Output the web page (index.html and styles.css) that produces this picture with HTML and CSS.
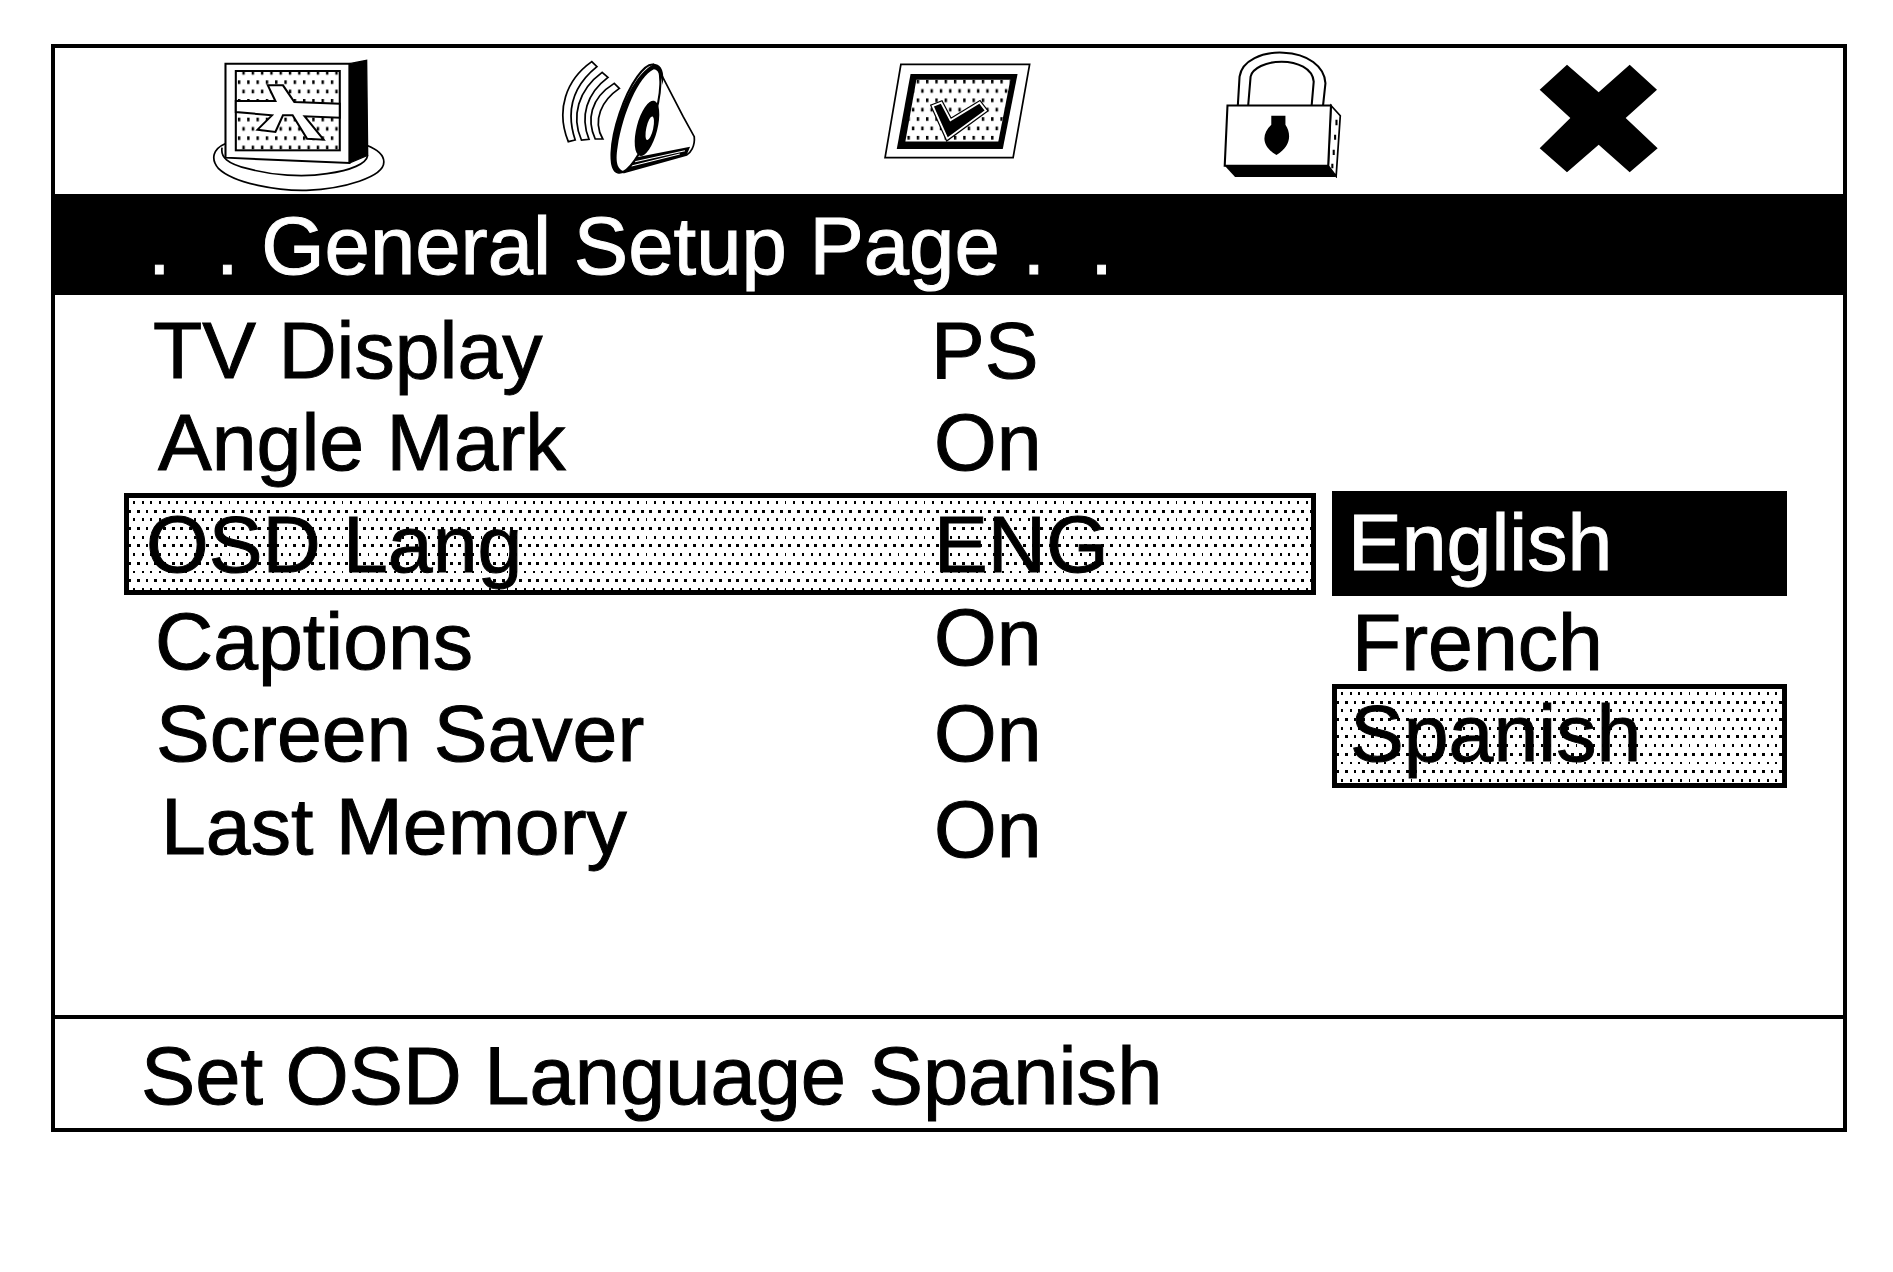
FILE: index.html
```html
<!DOCTYPE html>
<html lang="en">

<head>
  <meta charset="UTF-8" />
  <title>General Setup Page</title>
  <link rel="stylesheet" href="styles.css">
</head>

<body>
  <div class="screen">
    <div class="icons">
      <!-- TV -->
      <svg class="icon icon-tv" viewBox="60 50 520 411" preserveAspectRatio="none">
        <defs>
          <pattern id="dots" width="27" height="56" patternUnits="userSpaceOnUse" patternTransform="translate(6 8)">
            <rect x="0" y="0" width="7" height="11" fill="#000" />
            <rect x="13" y="28" width="7" height="11" fill="#000" />
          </pattern>
        </defs>
        <path d="M104 310C70 325 60 355 85 385C130 430 260 452 340 450C450 445 565 410 565 365C565 340 540 325 515 315" fill="none" stroke="#000" stroke-width="5" />
        <path d="M95 322C90 350 110 370 170 385C240 405 330 412 400 400C470 390 515 370 518 345" fill="none" stroke="#000" stroke-width="5" />
        <polygon points="465,70 515,60 518,345 465,368" fill="#000" stroke="#000" stroke-width="4" />
        <polygon points="105,70 465,70 465,368 105,352" fill="#fff" stroke="#000" stroke-width="6" />
        <rect x="135" y="92" width="302" height="238" fill="#fff" />
        <rect x="135" y="92" width="302" height="238" fill="url(#dots)" stroke="#000" stroke-width="6" />
        <polygon points="228,135 272,135 305,185 437,190 437,232 335,228 390,298 342,295 300,225 272,225 250,275 198,268 240,225 135,215 135,182 250,182" fill="#fff" stroke="#000" stroke-width="6" />
      </svg>
      <!-- speaker -->
      <svg class="icon icon-sound" viewBox="1070 60 400 345" preserveAspectRatio="none">
        <g fill="#fff" stroke="#000" stroke-width="5">
          <path d="M1165 65L1180 80C1120 130 1085 200 1117 300L1097 305C1060 210 1090 120 1165 65Z" />
          <path d="M1195 97L1212 112C1150 160 1130 230 1157 298L1135 300C1105 230 1125 150 1195 97Z" />
          <path d="M1230 130L1245 145C1195 180 1165 240 1197 297L1175 297C1150 240 1160 175 1230 130Z" />
          <path d="M1345 75L1370 110L1430 230L1462 290C1465 320 1450 340 1440 345L1260 397Z" />
        </g>
        <path d="M1295 352L1450 320L1440 345L1262 396Z" fill="#000" />
        <path d="M1290 365L1435 332M1280 378L1420 342" stroke="#fff" stroke-width="3" />
        <ellipse cx="1293" cy="236" rx="50" ry="170" transform="rotate(18 1293 236)" fill="#fff" stroke="#000" stroke-width="6" />
        <path d="M1345 73C1270 110 1215 290 1222 370C1228 398 1250 402 1265 395C1240 392 1232 370 1240 320C1255 220 1300 110 1345 88C1360 90 1368 115 1370 135C1378 95 1365 70 1345 73Z" fill="#000" />
        <ellipse cx="1325" cy="265" rx="30" ry="85" transform="rotate(14 1325 265)" fill="#000" />
        <ellipse cx="1333" cy="265" rx="10" ry="36" transform="rotate(12 1333 265)" fill="#fff" />
      </svg>
      <!-- check -->
      <svg class="icon icon-check" viewBox="70 70 430 290" preserveAspectRatio="none">
        <polygon points="122,74 496,74 448,353 76,353" fill="#fff" stroke="#000" stroke-width="5" />
        <polygon points="150,103 461,103 418,327 110,327" fill="#000" />
        <polygon points="167,120 440,120 405,305 135,305" fill="#fff" />
        <polygon points="167,120 440,120 405,305 135,305" fill="url(#dots)" />
        <polygon points="218,200 238,192 265,245 350,192 365,212 258,292" fill="#000" stroke="#000" stroke-width="18" />
        <polygon points="218,200 238,192 265,245 350,192 365,212 258,292" fill="#fff" stroke="#fff" stroke-width="11" />
        <polygon points="218,200 238,192 265,245 350,192 365,212 258,292" fill="#000" />
      </svg>
      <!-- lock -->
      <svg class="icon icon-lock" viewBox="1055 30 345 385" preserveAspectRatio="none">
        <g fill="none" stroke="#000" stroke-width="6">
          <path d="M1098 197L1103 110C1110 60 1170 35 1230 38C1300 40 1350 80 1352 130L1345 197" />
          <path d="M1128 197L1135 110C1140 85 1180 65 1225 65C1270 65 1315 85 1318 125L1312 197" />
        </g>
        <polygon points="1060,378 1360,378 1383,412 1090,412" fill="#000" />
        <polygon points="1368,197 1395,228 1383,410 1360,378" fill="#fff" stroke="#000" stroke-width="5" />
        <path d="M1384 240V256M1380 285V300M1376 330V346M1372 372V386" stroke="#000" stroke-width="6" />
        <polygon points="1068,197 1368,197 1360,378 1060,378" fill="#fff" stroke="#000" stroke-width="6" />
        <path d="M1195 228H1236V255C1255 285 1250 320 1210 346C1168 320 1165 285 1195 255Z" fill="#000" />
      </svg>
      <!-- close -->
      <svg class="icon icon-close" viewBox="55 40 360 330">
        <polygon points="142,45 237,128 330,45 412,120 318,205 414,296 330,368 237,285 142,368 60,296 152,205 60,120" fill="#000" />
      </svg>
    </div>

    <div class="title">.&nbsp;&nbsp;. General Setup Page .&nbsp;&nbsp;.</div>

    <div class="menu">
      <div class="settings">
        <div class="row row-tv"><span>TV Display</span><span>PS</span></div>
        <div class="row row-angle"><span>Angle Mark</span><span class="value">On</span></div>
        <div class="row row-osd"><span>OSD Lang</span><span class="value">ENG</span></div>
        <div class="row row-captions"><span>Captions</span><span class="value value-up">On</span></div>
        <div class="row row-saver"><span>Screen Saver</span><span class="value">On</span></div>
        <div class="row row-memory"><span>Last Memory</span><span class="value value-down">On</span></div>
      </div>
      <div class="options">
        <div class="option option-current">English</div>
        <div class="option option-french">French</div>
        <div class="option option-selected">Spanish</div>
      </div>
    </div>

    <div class="status">Set OSD Language Spanish</div>
  </div>
</body>

</html>
```

FILE: styles.css
```css
body {
  margin: 0;
  background-color: #fff;
  color: #000;
  font-family: "Liberation Sans", Arial, sans-serif;
  font-size: 80.6px;
  -webkit-text-stroke: 1px;
}

.screen {
  box-sizing: border-box;
  width: 1796px;
  height: 1088px;
  margin: 44px 0 0 51px;
  border: 4px solid #000;
}

.icons {
  display: flex;
  align-items: flex-start;
  height: 146px;
  padding-left: 155px;
}

.icon-tv {
  width: 179px;
  height: 137px;
  margin-top: 9px;
}

.icon-sound {
  width: 138px;
  height: 115px;
  margin-top: 12px;
  margin-left: 170px;
}

.icon-check {
  width: 148px;
  height: 97px;
  margin-top: 15px;
  margin-left: 186px;
}

.icon-lock {
  width: 119px;
  height: 128px;
  margin-top: 2px;
  margin-left: 192px;
}

.icon-close {
  width: 120px;
  height: 110px;
  margin-top: 15px;
  margin-left: 196px;
}

.title {
  height: 101px;
  padding-left: 93px;
  background-color: #000;
  color: #fff;
  font-size: 81.5px;
  line-height: 103px;
  white-space: pre;
}

.menu {
  display: flex;
  height: 720px;
  padding-left: 69px;
}

.settings {
  width: 1192px;
  padding-top: 10px;
}

.row {
  display: grid;
  grid-template-columns: 808px 1fr;
  height: 92px;
  line-height: 90px;
  padding-left: 31px;
  box-sizing: border-box;
}

.row > span:first-child {
  margin-left: -2px;
}

.row-angle > span:first-child {
  margin-left: 3px;
}

.row-captions {
  line-height: 92px;
}

.row-captions > span:first-child {
  margin-left: 0;
}

.row-saver {
  line-height: 92px;
}

.row-saver > span:first-child {
  margin-left: 1px;
}

.row-memory {
  line-height: 94px;
}

.row-memory > span:first-child {
  margin-left: 6px;
}

.row > span:last-child {
  margin-left: -32px;
}

.row > span.value {
  margin-left: -29px;
}

.row-osd {
  height: 102px;
  margin-top: 4px;
  padding: 1px 0 0 19px;
  border: 5px solid #000;
  background-image: url("data:image/svg+xml,%3Csvg xmlns='http://www.w3.org/2000/svg' width='18' height='36' shape-rendering='crispEdges'%3E%3Crect x='0' y='0' width='5' height='7'/%3E%3Crect x='9' y='18' width='5' height='7'/%3E%3C/svg%3E");
  background-size: 8.7px 17.4px;
  background-position: 4px 3px;
}

.row-osd > span:first-child {
  margin-left: -2px;
}

.row-osd > span.value {
  margin-left: -22px;
}

.value-up {
  margin-top: -4px;
}

.value-down {
  margin-top: 3px;
}

.options {
  width: 455px;
  margin-left: 16px;
  padding-top: 196px;
}

.option {
  box-sizing: border-box;
  padding-left: 16px;
}

.option-current {
  height: 105px;
  line-height: 102px;
  background-color: #000;
  color: #fff;
}

.option-french {
  height: 88px;
  line-height: 92px;
  padding-left: 20px;
}

.option-selected {
  height: 104px;
  line-height: 88px;
  border: 5px solid #000;
  padding-left: 13px;
  background-image: url("data:image/svg+xml,%3Csvg xmlns='http://www.w3.org/2000/svg' width='18' height='36' shape-rendering='crispEdges'%3E%3Crect x='0' y='0' width='5' height='7'/%3E%3Crect x='9' y='18' width='5' height='7'/%3E%3C/svg%3E");
  background-size: 8.7px 17.4px;
  background-position: 4px 3px;
}

.status {
  box-sizing: border-box;
  height: 112px;
  padding-left: 86px;
  border-top: 4px solid #000;
  font-size: 81.3px;
  line-height: 114px;
}
```
